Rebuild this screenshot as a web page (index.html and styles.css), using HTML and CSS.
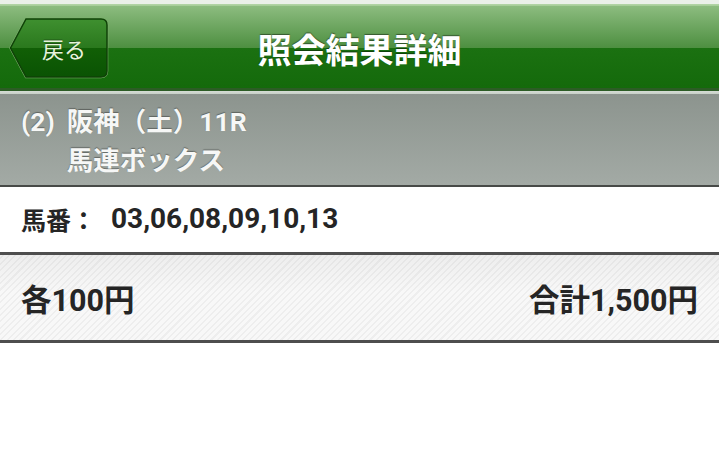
FILE: index.html
```html
<!DOCTYPE html>
<html lang="ja">
<head>
<meta charset="utf-8">
<title>照会結果詳細</title>
<link rel="stylesheet" href="styles.css">
</head>
<body>
<header class="topbar">
  <div class="topbar-left">
    <a class="back-btn" href="#">
      <svg class="back-shape" width="100" height="62" viewBox="0 0 100 62" aria-hidden="true">
        <defs>
          <linearGradient id="bg" x1="0" y1="0" x2="0" y2="1">
            <stop offset="0" stop-color="#3f9030"/>
            <stop offset="0.5" stop-color="#2a781d"/>
            <stop offset="0.5" stop-color="#115f06"/>
            <stop offset="1" stop-color="#0a5303"/>
          </linearGradient>
        </defs>
        <path d="M17 2 H92 Q98 2 98 8 V54 Q98 60 92 60 H17 L1.5 31 Z" fill="none" stroke="#7fb56f" stroke-width="2.5"/>
        <path d="M17 2 H92 Q98 2 98 8 V54 Q98 60 92 60 H17 L1.5 31 Z" fill="url(#bg)" stroke="#0f4207" stroke-width="1.5"/>
      </svg>
      <span class="back-label">戻る</span>
    </a>
  </div>
  <h1 class="title">照会結果詳細</h1>
  <div class="topbar-right"></div>
</header>

<section class="race">
  <span class="race-no">(2)</span>
  <div class="race-info">
    <div>阪神（土）11R</div>
    <div>馬連ボックス</div>
  </div>
</section>

<section class="numbers">
  <span class="label">馬番：</span>
  <span class="value">03,06,08,09,10,13</span>
</section>

<section class="amounts">
  <span>各100円</span>
  <span>合計1,500円</span>
</section>
</body>
</html>
```

FILE: styles.css
```css
* { box-sizing: border-box; }
html, body { margin: 0; padding: 0; background: #ffffff; }
body {
  font-family: "Roboto", "Noto Sans CJK JP", sans-serif;
  width: 719px;
}

.topbar {
  height: 94px;
  display: grid;
  grid-template-columns: 1fr auto 1fr;
  align-items: center;
  background:
    linear-gradient(to bottom,
      #eaf0e9 0, #eaf0e9 4px,
      #b4d6a8 4px, #a4cc97 6px,
      #8cbc7f 6px, #4d8f40 48px,
      #1b7111 48px, #146a0b 88px,
      #2c5c25 88px, #2c5c25 91px,
      #d5dcd5 91px, #c8d0c8 94px);
}
.topbar-left { display: flex; padding-left: 9px; padding-top: 1px; }

.back-btn {
  position: relative;
  display: flex;
  align-items: center;
  justify-content: center;
  width: 100px;
  height: 62px;
  padding-left: 10px;
  text-decoration: none;
}
.back-shape { position: absolute; left: 0; top: 0; }
.back-label {
  position: relative;
  color: #e6f3dc;
  font-size: 22px;
  font-weight: 400;
  text-shadow: 0 -1px 0 rgba(0,0,0,0.35);
}

.title {
  margin: 0;
  padding-top: 2px;
  color: #ffffff;
  font-size: 34px;
  font-weight: 700;
  letter-spacing: 0;
  text-shadow: 0 -1px 1px rgba(0,0,0,0.45);
}

.race {
  height: 93px;
  display: flex;
  align-items: flex-start;
  gap: 12px;
  padding: 8px 0 0 21px;
  background: linear-gradient(to bottom, #8c948e, #a3aaa5);
  border-bottom: 2px solid #474a47;
  color: #f6f7f6;
  font-size: 26.5px;
  font-weight: 700;
  line-height: 39px;
  text-shadow: 0 -1px 1px rgba(0,0,0,0.35);
}

.numbers {
  height: 68px;
  display: flex;
  align-items: center;
  gap: 15px;
  padding: 0 0 2px 21px;
  border-bottom: 3px solid #4e4e4e;
  color: #252525;
  font-size: 25px;
  font-weight: 700;
}
.numbers .value { font-size: 28px; }

.amounts {
  height: 88px;
  display: flex;
  align-items: center;
  justify-content: space-between;
  padding: 0 21px 0 21px;
  border-bottom: 3px solid #4e4e4e;
  color: #252525;
  font-size: 30.5px;
  font-weight: 700;
  background:
    linear-gradient(to bottom, rgba(0,0,0,0.045), rgba(0,0,0,0) 45%),
    repeating-linear-gradient(-45deg, #f8f8f8 0, #f8f8f8 3px, #eeeeee 3px, #eeeeee 4.5px);
}
```
